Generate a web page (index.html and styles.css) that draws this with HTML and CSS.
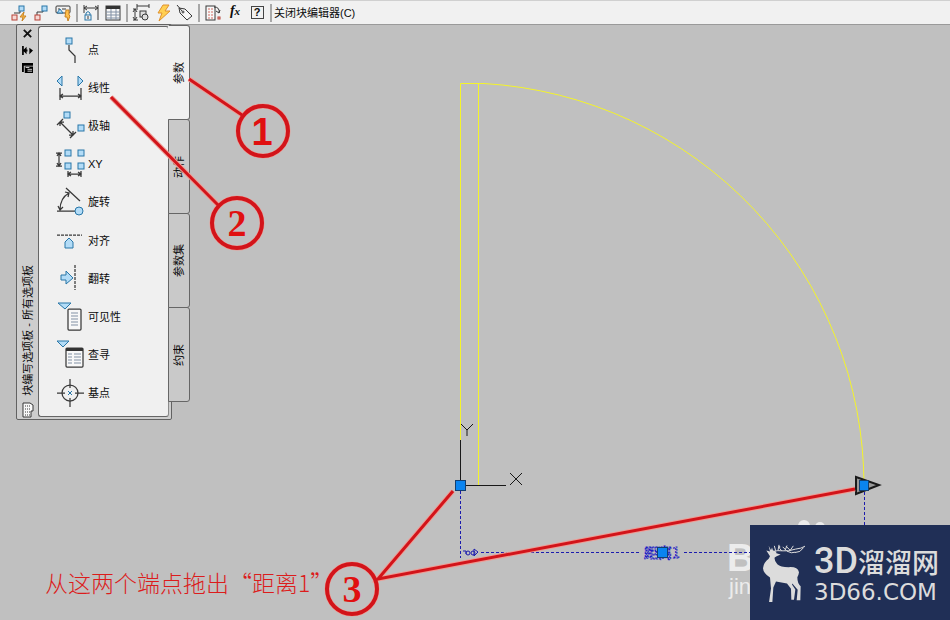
FILE: index.html
```html
<!DOCTYPE html>
<html lang="zh-CN">
<head>
<meta charset="utf-8">
<title>块编辑器</title>
<link rel="stylesheet" href="styles.css">
</head>
<body>
<div class="app">
  <header class="toolbar">
    <div class="group">
      <button aria-label="编辑块"><svg viewBox="0 0 18 18"><path class="k" d="M4 9h6V6"/><rect class="sq" x="9" y="2" width="5" height="5"/><rect class="rd" x="2" y="11" width="5" height="5"/><path class="or" d="M14 8l-4 5h3l-1 4 4-5h-3z"/></svg></button>
      <button aria-label="保存块"><svg viewBox="0 0 18 18"><path class="k" d="M5 11V8h6V7"/><rect class="sq" x="10" y="2" width="5" height="5"/><rect class="rd" x="3" y="11" width="5" height="5"/></svg></button>
      <button aria-label="测试块"><svg viewBox="0 0 18 18"><rect class="k" x="2" y="2" width="14" height="7" rx="1"/><path class="k" d="M4 5h2M8 5h4"/><path class="sq" d="M3 9l3-4 3 4z"/><path class="or" d="M12 6h3v5l1 1-2 5-1-4h-2z"/></svg></button>
    </div>
    <div class="group">
      <button aria-label="自动约束"><svg viewBox="0 0 18 18"><path class="k" d="M2 1v8M16 1v15M2 4h14M5 2L2 4l3 2M13 2l3 2-3 2"/><path class="lk" d="M4 11V9q2-3 4 0v2"/><rect class="lk" x="3" y="11" width="6" height="5"/><path class="k" d="M6 12v3"/></svg></button>
      <button aria-label="块表"><svg viewBox="0 0 18 18"><rect class="k w" x="2" y="2" width="14" height="14"/><path class="dk" d="M2 2h14v3H2z"/><path class="g" d="M2 8h14M2 11h14M2 14h14M7 5v11M12 5v11"/></svg></button>
    </div>
    <div class="group">
      <button aria-label="参数"><svg viewBox="0 0 18 18"><path class="k" d="M1 5h5M1 16h5M3 5v11M5 2h12M5 0v4M17 0v4M1 8l2-3 2 3M1 13l2 3 2-3"/><rect class="k gf" x="8" y="7" width="6" height="6"/><circle class="k gf" cx="13" cy="13" r="3"/></svg></button>
      <button aria-label="动作"><svg viewBox="0 0 18 18"><path class="bolt" d="M9 1h6l-4 6h5L5 17l3-8H4z"/></svg></button>
      <button aria-label="定义属性"><svg viewBox="0 0 18 18"><path class="k w" d="M3 4l6 1 7 7-5 4-7-7z"/><path class="k" d="M1 1l5 6"/><circle class="k" cx="7" cy="8" r="1"/></svg></button>
    </div>
    <div class="group">
      <button aria-label="编写选项板"><svg viewBox="0 0 18 18"><rect class="k w" x="2" y="2" width="9" height="14"/><path class="rdash" d="M4 5h6M4 8h6M4 11h6M4 14h6"/><path class="k" d="M10 3q6 0 5 6M12 7l3 2 1-3"/><rect class="rd" x="14" y="13" width="2" height="2"/></svg></button>
      <button class="fx" aria-label="参数管理器">f<small>x</small></button>
      <button aria-label="帮助"><span class="help">?</span></button>
    </div>
    <div class="group"><button class="close">关闭块编辑器(C)</button></div>
  </header>

  <main class="workspace">
    <aside class="palette">
      <div class="caption">
        <button aria-label="关闭"><svg viewBox="0 0 12 12"><path class="bk" d="M2 2l8 8M10 2l-8 8"/></svg></button>
        <button aria-label="自动隐藏"><svg viewBox="0 0 12 12"><path class="bk" d="M1 1v10M2 6h4"/><path d="M5 2L1 6l4 4zM8 3l4 3-4 4z"/></svg></button>
        <button aria-label="特性"><svg viewBox="0 0 12 12"><path d="M0 1h12v3H0zM0 4h2v7H0zM3 5h9v7H3z"/><path class="wl" d="M4 6h4M6 8h5M6 10h5"/></svg></button>
        <span class="side title">块编写选项板 - 所有选项板</span>
        <svg class="foot" viewBox="0 0 12 16"><path class="k w" d="M1 1h7l3 2v6H9v6H1z"/><path class="kd" d="M3 4h5M3 7h5M3 10h5M3 13h5"/></svg>
      </div>
      <div class="tools">
        <button><svg viewBox="0 0 32 34"><path class="k" d="M15 12v5l6 6v7"/><rect class="sq" x="12" y="5" width="6" height="6"/></svg>点</button>
        <button><svg viewBox="0 0 32 34"><path class="sq" d="M8 5v10l-5-5zM24 5v10l5-5z"/><path class="k" d="M6 17v12M27 17v12M6 25h21M9 23l-3 2 3 2M24 23l3 2-3 2"/></svg>线性</button>
        <button><svg viewBox="0 0 32 34"><path class="k" d="M3 16l6-6M16 29l6-6M6 13l13 13M6 17v-4h4M19 22v4h-4"/><rect class="sq" x="10" y="3" width="6" height="6"/><rect class="sq" x="24" y="16" width="6" height="6"/></svg>极轴</button>
        <button><svg viewBox="0 0 32 34"><path class="k" d="M2 6h6M2 19h6M5 6v13M3 9l2-3 2 3M3 16l2 3 2-3M14 24v6M27 24v6M14 27h13M17 25l-3 2 3 2M24 25l3 2-3 2"/><rect class="sq" x="11" y="3" width="6" height="6"/><rect class="sq" x="24" y="3" width="6" height="6"/><rect class="sq" x="11" y="16" width="6" height="6"/><rect class="sq" x="24" y="16" width="6" height="6"/></svg>XY</button>
        <button><svg viewBox="0 0 32 34"><path class="k" d="M3 26h20M12 3l14 13M6 25Q6 13 15 8M4 21l2 4 3-3M11 7l4 1-1 4"/><circle class="sq" cx="25" cy="26" r="4"/></svg>旋转</button>
        <button><svg viewBox="0 0 32 34"><path class="dash" d="M3 11h25"/><path class="sq" d="M11 24v-6l4-4 4 4v6z"/></svg>对齐</button>
        <button><svg viewBox="0 0 32 34"><path class="sq" d="M7 13h5V9l7 7-7 6v-4H7z"/><path class="dash" d="M21 3v25"/></svg>翻转</button>
        <button><svg viewBox="0 0 32 34"><path class="sq" d="M4 3h13l-6 6z"/><rect class="k w" x="14" y="9" width="13" height="21" rx="1"/><path class="g" d="M17 13h7M17 16h7M17 19h7M17 22h7M17 25h7"/></svg>可见性</button>
        <button><svg viewBox="0 0 32 34"><path class="sq" d="M3 3h12l-6 6z"/><rect class="k w" x="12" y="10" width="17" height="19" rx="1"/><path class="dk" d="M12 10h17v3H12z"/><path class="g" d="M14 16h4M20 16h7M14 19h4M20 19h7M14 22h4M20 22h7M14 25h4M20 25h7"/></svg>查寻</button>
        <button><svg viewBox="0 0 32 34"><circle class="k" cx="16" cy="17" r="8"/><path class="k" d="M3 17h8M21 17h9M16 3v9M16 22v9"/><path class="lk" d="M14 15l4 4M18 15l-4 4"/></svg>基点</button>
      </div>
      <nav class="tabs">
        <button class="on"><span class="side">参数</span></button>
        <button><span class="side">动作</span></button>
        <button><span class="side">参数集</span></button>
        <button><span class="side">约束</span></button>
      </nav>
    </aside>
  </main>

  <svg class="drawing">
    <g class="mark">
      <circle cx="804" cy="526" r="6"/><circle cx="820" cy="527" r="5"/>
      <text class="mark-b" x="727" y="571">B</text>
      <text class="mark-j" x="729" y="594">jin</text>
    </g>
    <path class="door" d="M460.500 440V83.500H484A404 403 0 0 1 864 486M478.500 83V485"/>
    <path class="axis" d="M460.500 440v46M460 485.500h46M461 424l6 6 6-6M467 430v6M510 473l12 12M522 473l-12 12"/>
    <path class="dim" d="M460.500 491v67M864.500 492v40M481 552.500h160M684 552.500h66"/>
    <path class="dimend" d="M463 551h3v3M474 549l4 3-4 4M474 549v7"/>
    <circle class="dimend" cx="468" cy="553" r="2"/><circle class="dimend" cx="473" cy="553" r="2"/>
    <text class="dimtext" x="644" y="558">距离1</text>
    <path class="tip" d="M856 477l23 8-23 9z"/>
    <g class="grip"><rect x="455.500" y="480.500" width="10" height="10"/><rect x="657.500" y="547.500" width="10" height="10"/><rect x="859.500" y="480.500" width="9" height="10"/></g>
    <g class="halo"><path d="M189 79l53 36M111 97l107 108M453 491l-75 88 477-90"/><circle cx="263" cy="131" r="25"/><circle cx="237" cy="223" r="25"/><circle cx="352" cy="589" r="25"/></g>
    <g class="pen"><path d="M189 79l53 36M111 97l107 108M453 491l-75 88 477-90"/><circle cx="263" cy="131" r="25"/><circle cx="237" cy="223" r="25"/><circle cx="352" cy="589" r="25"/></g>
    <g class="num"><text class="one" x="262" y="145">1</text><text x="237" y="236">2</text><text x="352" y="602">3</text></g>
    <text class="note" x="45" y="592">从这两个端点拖出“距离1”</text>
  </svg>

  <div class="brand">
    <svg viewBox="65 100 135 176"><path d="M78 122l11 3-4-17 7 13 3-8 3 9q11 2 10 8l13 4-12 5-6 4q-2 10 8 20 9 9 34 9 27-2 31 15-1 8-5 15 0 18 10 27l-1 42h-11l3-31-16-19-1 3 10 15-4 31h-8l-1-33-12-16-33-6-8 18-3 45H86l6-42-3-33q-20-13-21-28 2-17 17-28l4-8z"/><path class="horn" d="M98 125q14-4 30-2t37-5q19-2 29-9M106 123l-4-15M113 122l3-17M124 123q-9-7-6-15M139 123l-12-12M134 122l6-15M150 122l-13-13M150 121l9-13M164 128q16 1 26-15M140 124q14 8 25 3"/></svg>
    <div class="words"><div class="name"><span>3D</span>溜溜网</div><div class="site">3D66.COM</div></div>
  </div>
</div>
</body>
</html>
```

FILE: styles.css
```css
* { box-sizing: border-box; }

body {
  margin: 0;
  font: 11px/14px "Liberation Sans", "Noto Sans CJK SC", sans-serif;
  color: #0c0c0c;
}

button {
  margin: 0;
  padding: 0;
  border: 0;
  background: none;
  font: inherit;
  color: inherit;
}

svg { display: block; }

.app {
  position: relative;
  display: flex;
  flex-direction: column;
  min-height: 100vh;
  overflow: hidden;
  background: #c0c0c0;
}

/* toolbar */
.toolbar {
  display: flex;
  align-items: center;
  height: 25px;
  padding-left: 8px;
  background: #f1f1f1;
  border-top: 1px solid #d0d0d0;
  border-bottom: 1px solid #9a9a9a;
}

.group { display: flex; align-items: center; }

.group + .group::before {
  content: "";
  width: 2px;
  height: 18px;
  margin: 0 2px;
  background: #a8a8a8;
}

.group button {
  display: flex;
  justify-content: center;
  align-items: center;
  width: 22px;
  height: 20px;
}

.group svg { width: 18px; height: 18px; }
.group .close { width: auto; white-space: nowrap; }
.group .fx { font: italic bold 14px/16px "Liberation Serif", serif; align-items: baseline; }
.fx small { font-size: 11px; }

.help {
  width: 13px;
  height: 13px;
  border: 1px solid #444;
  font: bold 11px/11px "Liberation Sans", sans-serif;
}

/* icon strokes and fills */
.k, .g, .kd, .dash, .rdash, .lk, .bk, .wl { fill: none; stroke: #383838; stroke-width: 1; }
.g { stroke: #8291a5; }
.kd { stroke-dasharray: 1 1; }
.w { fill: #f8f8f8; }
.gf { fill: #ddd; }
.dk { fill: #333; }
.sq { fill: #b3dcf7; stroke: #2876a8; }
.rd { fill: #f6d8d4; stroke: #b84237; }
.or { fill: #ffc04c; stroke: #c98322; }
.bolt { fill: #ffd052; stroke: #e0912e; }
.lk { stroke: #2876a8; }
.bk { stroke: #111; stroke-width: 2; }
.wl { stroke: #ddd; }
.dash { stroke-dasharray: 3 1; }
.rdash { stroke: #d26c62; stroke-dasharray: 2 1; }

/* floating palette */
.workspace { position: relative; flex: 1; }

.palette {
  position: absolute;
  left: 16px;
  top: -1px;
  display: flex;
  width: 156px;
  height: 396px;
  border: 1px solid #626262;
  border-radius: 2px;
  background: #cecece;
}

.caption {
  flex: none;
  display: flex;
  flex-direction: column;
  align-items: center;
  gap: 6px;
  width: 21px;
  padding: 3px 0 1px;
}

.caption button svg { width: 11px; height: 11px; }
.title { margin-top: auto; }
.foot { width: 12px; height: 16px; }

.side {
  writing-mode: vertical-rl;
  text-orientation: sideways;
  transform: rotate(180deg);
  white-space: nowrap;
}

.tools {
  flex: none;
  display: grid;
  grid-auto-rows: 1fr;
  width: 131px;
  margin: 1px 0 2px;
  padding: 4px 0;
  border: 1px solid #666;
  border-right-color: #8a8a8a;
  border-radius: 3px;
  background: #f0f0f0;
}

.tools button {
  display: flex;
  align-items: center;
  gap: 2px;
  padding-left: 15px;
}

.tools svg { width: 32px; height: 34px; }
.tools .k, .tools .dash { stroke-width: 1.25; }

.tabs {
  flex: none;
  display: flex;
  flex-direction: column;
  width: 22px;
  margin-left: -1px;
}

.tabs button {
  display: flex;
  justify-content: center;
  align-items: center;
  height: 95px;
  margin-bottom: -1px;
  border: 1px solid #666;
  border-radius: 0 3px 3px 0;
  background: #c9c9c9;
}

.tabs .on { border-left-color: #f0f0f0; background: #f0f0f0; }

/* drawing and call-outs */
.drawing {
  position: absolute;
  inset: 0;
  width: 100%;
  height: 100%;
  pointer-events: none;
}

.drawing path, .halo circle, .pen circle { fill: none; }
.door { stroke: #f4f42a; }
.axis { stroke: #181818; }
.dim { stroke: #1c1cae; stroke-dasharray: 3 2; }
.dimend { fill: none; stroke: #1c1cae; }
.dimtext { font-size: 14px; font-family: "Noto Sans CJK SC", sans-serif; fill: none; stroke: #1c1cc4; stroke-width: 1; stroke-dasharray: 2 1; }
.drawing .tip { fill: #999; stroke: #1a1a1a; stroke-width: 2; }
.grip { fill: #0a84f0; stroke: #123f70; }
.halo { stroke: #ee9c94; stroke-width: 5; }
.pen { stroke: #d2141a; stroke-width: 3; }
.pen circle { stroke-width: 4; }
.num { fill: #e01010; text-anchor: middle; font: bold 38px "Liberation Serif", serif; }
.one { font-family: "Liberation Sans", sans-serif; }
.note { fill: #dc1c1c; font: 300 23px "Noto Sans CJK SC", sans-serif; }
.mark { fill: #ececec; }
.mark-b { font: bold 38px "Liberation Sans", sans-serif; }
.mark-j { font: 22px "Liberation Sans", sans-serif; }

/* corner logo */
.brand {
  position: absolute;
  right: 0;
  bottom: 0;
  display: flex;
  align-items: flex-start;
  gap: 7px;
  width: 200px;
  height: 95px;
  padding: 18px 0 0 12px;
  background: #202f56;
  color: #dcdcdc;
}

.brand svg { flex: none; width: 45px; height: 59px; fill: #dcdcdc; }
.brand .horn { fill: none; stroke: #dcdcdc; stroke-width: 3; }
.words { white-space: nowrap; }
.name { font: 500 27px/36px "Noto Sans CJK SC", sans-serif; }
.name span { font: 500 36px/36px Roboto, sans-serif; }
.site { font: 23px/24px "DejaVu Sans", sans-serif; }
```
